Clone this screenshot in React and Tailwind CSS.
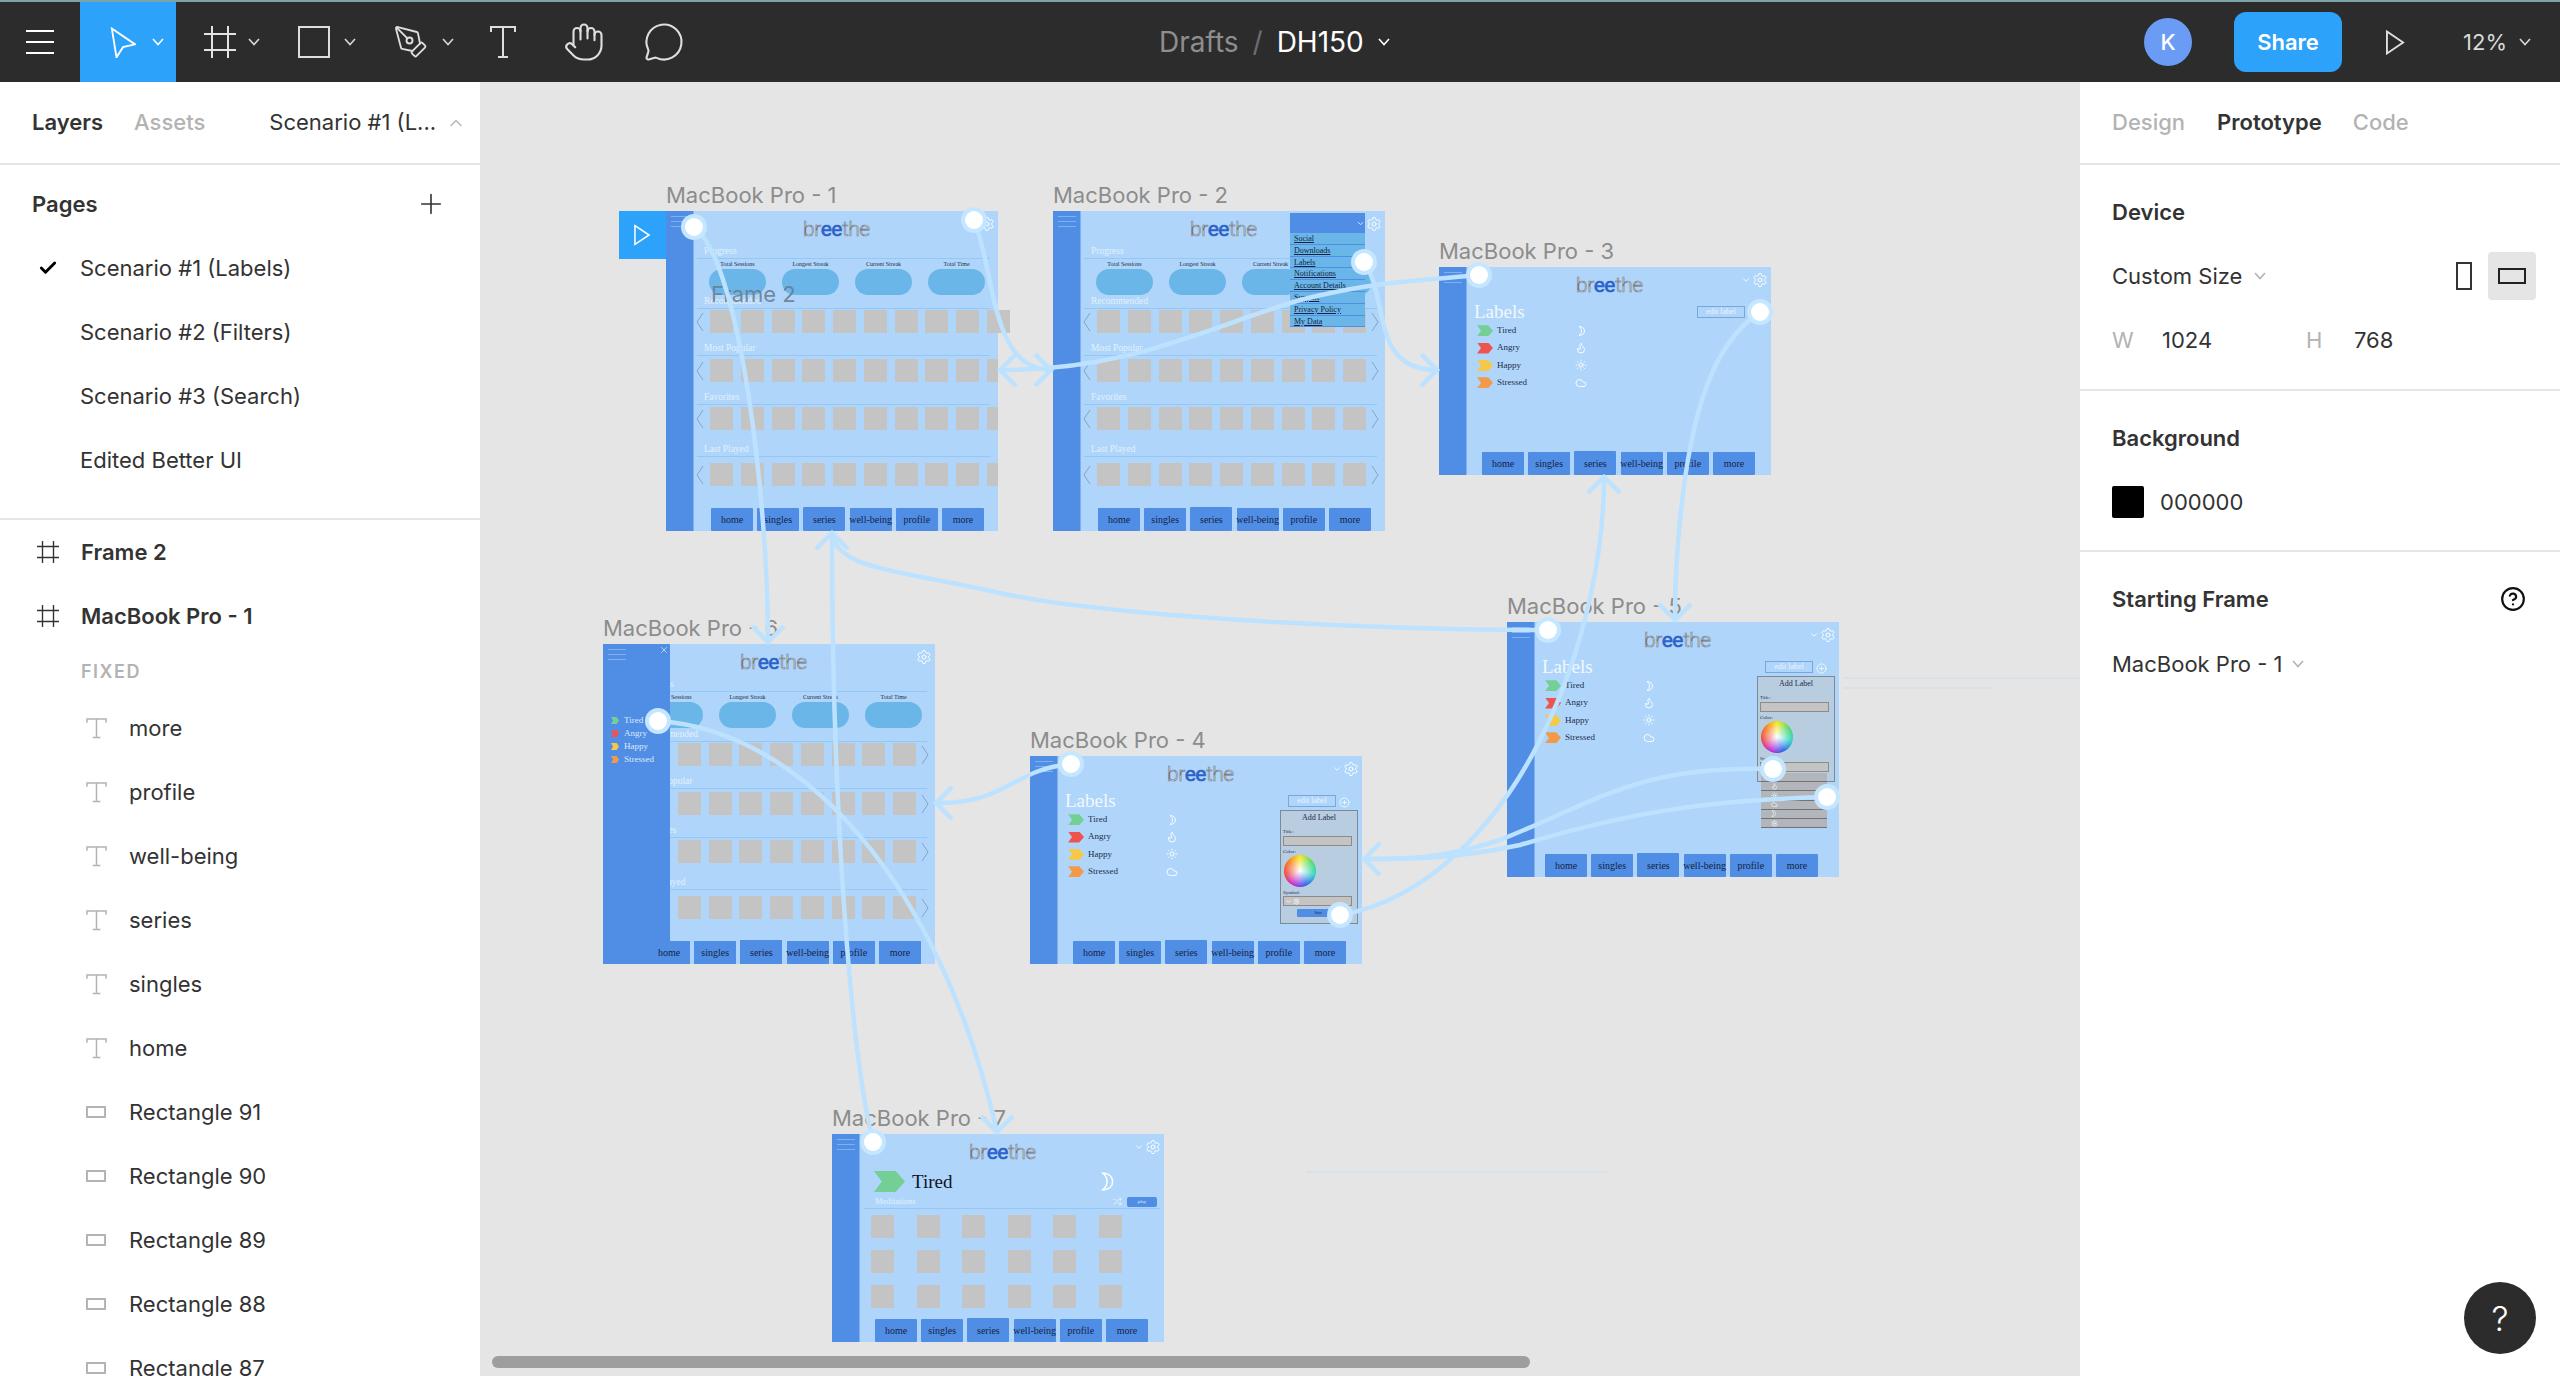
import React from "react";
import { Settings, Flame, Sun, Cloud, X, Shuffle, PlusCircle, ChevronDown, ChevronUp, Hand, MessageCircle, PenTool, Plus, Check, CircleHelp } from "lucide-react";

const serif = "font-['Liberation_Serif',serif]";

function Chev({ className = "text-white" }) {
  return (
    <svg viewBox="0 0 12 8" className={`w-[12px] h-[8px] shrink-0 ${className}`} fill="none" stroke="currentColor" strokeWidth="1.6">
      <path d="M1 1l5 5.5L11 1" />
    </svg>
  );
}

function Crescent({ className, strokeWidth = 1.6 }) {
  return (
    <svg viewBox="0 0 14 20" className={className} fill="none" stroke="currentColor" strokeWidth={strokeWidth} strokeLinejoin="round">
      <path d="M2 1c7 0 11 4 11 9s-4 9-11 9c3-2 5-5 5-9s-2-7-5-9z" />
    </svg>
  );
}

function FrameGlyph({ className }) {
  return (
    <svg viewBox="0 0 32 32" className={className} fill="none" stroke="currentColor" strokeWidth="2">
      <path d="M8 0v32M24 0v32M0 8h32M0 24h32" />
    </svg>
  );
}

function TGlyph() {
  return (
    <svg viewBox="0 0 22 22" className="w-[21px] h-[21px] text-[#b3b3b3]" fill="none" stroke="currentColor" strokeWidth="1.6">
      <path d="M1 5V1h20v4M1 1h20M11 1v20M7 20.5h8" />
    </svg>
  );
}

function RectGlyph() {
  return <div className="w-[20px] h-[12px] border-2 border-[#b3b3b3]" />;
}

function TopBar() {
  return (
    <div className="h-[80px] bg-[#2c2c2c] flex items-center shrink-0">
      <div className="w-[80px] h-full flex flex-col items-center justify-center gap-[9px]">
        <div className="w-[28px] h-[2px] bg-white" />
        <div className="w-[28px] h-[2px] bg-white" />
        <div className="w-[28px] h-[2px] bg-white" />
      </div>
      <div className="w-[96px] h-full bg-[#2ca2fb] flex items-center pl-[30px] gap-[16px]">
        <svg viewBox="0 0 28 32" className="w-[26px] h-[31px]" fill="none" stroke="white" strokeWidth="2">
          <path d="M2 1l25 17-13 3-7 11z" />
        </svg>
        <Chev />
      </div>
      <div className="w-[96px] h-full flex items-center pl-[28px] gap-[12px] text-[#e3e3e3]">
        <FrameGlyph className="w-[32px] h-[32px]" />
        <Chev className="text-[#d8d8d8]" />
      </div>
      <div className="w-[96px] h-full flex items-center pl-[26px] gap-[14px]">
        <div className="w-[32px] h-[32px] border-2 border-[#dedede]" />
        <Chev className="text-[#d8d8d8]" />
      </div>
      <div className="w-[96px] h-full flex items-center pl-[25px] gap-[13px] text-[#dedede]">
        <PenTool size={36} strokeWidth={1.25} />
        <Chev className="text-[#d8d8d8]" />
      </div>
      <div className="w-[80px] h-full flex items-center pl-[26px] text-[#dedede]">
        <svg viewBox="0 0 26 32" className="w-[26px] h-[32px]" fill="none" stroke="currentColor" strokeWidth="2">
          <path d="M1 6V1h24v5M1 1h24M13 1v30M8 31h10" />
        </svg>
      </div>
      <div className="w-[80px] h-full flex items-center justify-center text-[#dedede]">
        <Hand size={42} strokeWidth={1.2} />
      </div>
      <div className="w-[80px] h-full flex items-center justify-center text-[#dedede]">
        <MessageCircle size={42} strokeWidth={1.2} />
      </div>
      <div className="ml-[455px] flex items-center text-[28px] leading-none">
        <span className="text-[#8e8e8e]">Drafts</span>
        <span className="text-[#6e6e6e] ml-[14px] mr-[14px]">/</span>
        <span className="text-white">DH150</span>
        <Chev className="text-white ml-[14px]" />
      </div>
      <div className="ml-auto flex items-center pr-[29px]">
        <div className="w-[48px] h-[48px] rounded-full bg-[#6b9cf5] flex items-center justify-center text-white text-[22px] font-medium">K</div>
        <div className="ml-[42px] w-[108px] h-[60px] rounded-[12px] bg-[#2ca2fb] flex items-center justify-center text-white text-[22px] font-semibold">Share</div>
        <svg viewBox="0 0 20 26" className="ml-[44px] w-[19px] h-[25px]" fill="none" stroke="#dedede" strokeWidth="2">
          <path d="M1 1.5l17 11.5-17 11.5z" />
        </svg>
        <span className="ml-[58px] text-[22px] text-[#d9d9d9]">12%</span>
        <Chev className="text-[#d8d8d8] ml-[12px]" />
      </div>
    </div>
  );
}

function Row({ children, className = "" }) {
  return <div className={`h-[64px] flex items-center shrink-0 text-[22px] text-[#333] ${className}`}>{children}</div>;
}

function LeftPanel() {
  const texts = ["more", "profile", "well-being", "series", "singles", "home"];
  const rects = ["Rectangle 91", "Rectangle 90", "Rectangle 89", "Rectangle 88", "Rectangle 87"];
  const pages = ["Scenario #2 (Filters)", "Scenario #3 (Search)", "Edited Better UI"];
  return (
    <aside className="w-[480px] shrink-0 bg-white flex flex-col overflow-hidden">
      <div className="h-[83px] shrink-0 border-b-2 border-[#e5e5e5] flex items-center text-[22px] pl-[32px]">
        <span className="font-semibold text-[#333]">Layers</span>
        <span className="font-medium text-[#b3b3b3] ml-[31px]">Assets</span>
        <span className="text-[#333] ml-[64px]">Scenario #1 (L...</span>
        <ChevronUp size={20} className="ml-[10px] text-[#b3b3b3]" strokeWidth={1.6} />
      </div>
      <div className="h-[71px] pt-[7px] shrink-0 flex items-center justify-between pl-[32px] pr-[33px]">
        <span className="text-[22px] font-semibold text-[#333]">Pages</span>
        <Plus size={32} strokeWidth={1.2} className="text-[#333]" />
      </div>
      <Row className="pl-[38px]">
        <Check size={20} strokeWidth={3.5} className="text-black" />
        <span className="ml-[22px]">Scenario #1 (Labels)</span>
      </Row>
      {pages.map((p) => (
        <Row key={p} className="pl-[80px]">{p}</Row>
      ))}
      <div className="h-[26px] shrink-0 border-b-2 border-[#e5e5e5] box-content" />
      {["Frame 2", "MacBook Pro - 1"].map((f) => (
        <Row key={f} className="pl-[37px] font-semibold">
          <FrameGlyph className="w-[22px] h-[22px] text-[#333]" />
          <span className="ml-[22px]">{f}</span>
        </Row>
      ))}
      <div className="h-[48px] pb-[2px] shrink-0 flex items-center pl-[81px] text-[18px] font-semibold tracking-[1.5px] text-[#b3b3b3]">FIXED</div>
      {texts.map((t) => (
        <Row key={t} className="pl-[86px]">
          <TGlyph />
          <span className="ml-[22px]">{t}</span>
        </Row>
      ))}
      {rects.map((t) => (
        <Row key={t} className="pl-[86px] items-start pt-[19px]">
          <div className="mt-[7px]"><RectGlyph /></div>
          <span className="ml-[23px] leading-[26px]">{t}</span>
        </Row>
      ))}
    </aside>
  );
}

function RightPanel() {
  return (
    <aside className="w-[480px] shrink-0 bg-white flex flex-col text-[22px] text-[#333]">
      <div className="h-[83px] shrink-0 border-b-2 border-[#e5e5e5] flex items-center pl-[32px]">
        <span className="font-medium text-[#b3b3b3]">Design</span>
        <span className="font-semibold ml-[32px]">Prototype</span>
        <span className="font-medium text-[#b3b3b3] ml-[31px]">Code</span>
      </div>
      <div className="h-[87px] pt-[7px] flex items-center pl-[32px] font-semibold shrink-0">Device</div>
      <div className="h-[48px] flex items-center pl-[32px] shrink-0">
        <span>Custom Size</span>
        <Chev className="text-[#b3b3b3] ml-[12px]" />
        <div className="ml-auto w-[16px] h-[28px] border-2 border-[#333]" />
        <div className="ml-[16px] mr-[24px] w-[48px] h-[48px] rounded-[4px] bg-[#e5e5e5] flex items-center justify-center">
          <div className="w-[28px] h-[16px] border-2 border-[#222]" />
        </div>
      </div>
      <div className="h-[80px] flex items-center pl-[32px] shrink-0">
        <span className="text-[#b3b3b3] w-[50px]">W</span>
        <span className="w-[144px]">1024</span>
        <span className="text-[#b3b3b3] w-[48px]">H</span>
        <span>768</span>
      </div>
      <div className="h-[11px] shrink-0 border-b-2 border-[#e5e5e5]" />
      <div className="h-[94px] flex items-center pl-[32px] font-semibold shrink-0">Background</div>
      <div className="h-[33px] flex items-center pl-[32px] pt-[1px] shrink-0">
        <div className="w-[32px] h-[32px] bg-black rounded-[2px]" />
        <span className="ml-[16px]">000000</span>
      </div>
      <div className="h-[34px] shrink-0 border-b-2 border-[#e5e5e5]" />
      <div className="h-[94px] flex items-center justify-between pl-[32px] pr-[34px] font-semibold shrink-0">
        <span>Starting Frame</span>
        <CircleHelp size={26} strokeWidth={2} className="text-[#111]" />
      </div>
      <div className="h-[36px] flex items-center pl-[32px] shrink-0">
        <span>MacBook Pro - 1</span>
        <Chev className="text-[#b3b3b3] ml-[10px]" />
      </div>
    </aside>
  );
}

function Hamburger() {
  return (
    <div className="flex flex-col gap-[4px] pt-[5px] pl-[5px]">
      <div className="w-[18px] h-[1px] bg-[#7fb0f0]" />
      <div className="w-[18px] h-[1px] bg-[#7fb0f0]" />
      <div className="w-[18px] h-[1px] bg-[#7fb0f0]" />
    </div>
  );
}

function Logo() {
  return (
    <div className="font-['Roboto',sans-serif] font-light text-[21px] leading-[22px] tracking-[-0.5px] text-[#e3ebf3] [-webkit-text-stroke:0.6px_#70747c]">
      br<span className="text-[#2d62c9] font-normal [-webkit-text-stroke:0.6px_#2d62c9]">ee</span>the
    </div>
  );
}

function FrameHeader({ chevron = true }) {
  return (
    <div className="h-[34px] shrink-0 flex items-start pt-[4px] pr-[3px]">
      <div className="ml-[109px] mt-[3px]"><Logo /></div>
      <div className="ml-auto flex items-center gap-[1px] text-white mt-[1px]">
        {chevron && <ChevronDown size={10} strokeWidth={2} />}
        <Settings size={16} strokeWidth={1.4} />
      </div>
    </div>
  );
}

function SectionTitle({ children, className = "" }) {
  return (
    <div className={`h-[14px] shrink-0 ml-[3px] mr-[8px] border-b border-[#93c8f6] flex items-center pl-[7px] text-[9.5px] text-[#e3f0fc] ${serif} ${className}`}>
      {children}
    </div>
  );
}

function Caret({ dir }) {
  return (
    <svg viewBox="0 0 8 20" className="w-[8px] h-[20px] shrink-0" fill="none" stroke="#7f9cc0" strokeWidth="0.9">
      <path d={dir === "left" ? "M7 1L1 10l6 9" : "M1 1l6 9-6 9"} />
    </svg>
  );
}

function Squares({ extra = 0, className = "" }) {
  return (
    <div className={`h-[23px] shrink-0 flex items-center ${className}`}>
      <div className="ml-[2px] mr-[6px]"><Caret dir="left" /></div>
      <div className="flex gap-[7.75px] shrink-0">
        {Array.from({ length: 9 }).map((_, i) => (
          <div key={i} className="w-[23px] h-[23px] bg-[#c4c4c4]" />
        ))}
        {extra === 23 && <div className="w-[23px] h-[23px] bg-[#c4c4c4]" />}
        {extra === 11 && <div className="w-[11px] h-[23px] bg-[#c4c4c4]" />}
      </div>
      {extra === 0 && <div className="ml-[5px]"><Caret dir="right" /></div>}
    </div>
  );
}

function NavButtons({ className = "pl-[17px]" }) {
  const items = ["home", "singles", "series", "well-being", "profile", "more"];
  return (
    <div className={`mt-auto flex items-end gap-[4.2px] relative ${className}`}>
      {items.map((n) => (
        <div
          key={n}
          className={`w-[42px] ${n === "series" ? "h-[24px]" : "h-[23px]"} rounded-[1px] bg-[#508de5] flex items-center justify-center whitespace-nowrap text-[10px] text-[#15233f] ${serif}`}
        >
          {n}
        </div>
      ))}
    </div>
  );
}

function FrameShell({ className, label, children }) {
  return (
    <div className={`absolute ${className} w-[332px] bg-[#afd6fa] flex`}>
      <div className="absolute left-0 -top-[29px] h-[26px] text-[22px] leading-[26px] whitespace-nowrap text-[#8c8c8c]">{label}</div>
      <div className="w-[28px] shrink-0 bg-[#508de5] border-r border-[#7fb0f0]"><Hamburger /></div>
      <div className="flex-1 min-w-0 flex flex-col relative">{children}</div>
    </div>
  );
}

function Stats() {
  const labels = ["Total Sessions", "Longest Streak", "Current Streak", "Total Time"];
  return (
    <div className="shrink-0 pl-[15px]">
      <div className={`h-[10px] flex gap-[16px] ${serif} text-[6px] text-[#1d2c4a] text-center`}>
        {labels.map((l) => (
          <div key={l} className="w-[57px] leading-[10px] whitespace-nowrap">{l}</div>
        ))}
      </div>
      <div className="h-[26px] flex gap-[16px]">
        {labels.map((l) => (
          <div key={l} className="w-[57px] h-[26px] rounded-full bg-[#6ab6e8]" />
        ))}
      </div>
    </div>
  );
}

function Dashboard({ first }) {
  return (
    <>
      <FrameHeader chevron={false} />
      <SectionTitle>Progress</SectionTitle>
      <Stats />
      <SectionTitle>Recommended</SectionTitle>
      <Squares extra={first ? 23 : 0} className="mt-[1px]" />
      <SectionTitle className="mt-[9px]">Most Popular</SectionTitle>
      <Squares extra={first ? 11 : 0} className="mt-[3px]" />
      <SectionTitle className="mt-[9px]">Favorites</SectionTitle>
      <Squares extra={first ? 11 : 0} className="mt-[2px]" />
      <SectionTitle className="mt-[13px]">Last Played</SectionTitle>
      <Squares extra={first ? 11 : 0} className="mt-[6px]" />
      <NavButtons />
    </>
  );
}

function Flag({ color, className = "w-[16px] h-[11px]" }) {
  return <div className={`${className} ${color} shrink-0 [clip-path:polygon(0_0,70%_0,100%_50%,70%_100%,0_100%,25%_50%)]`} />;
}

const LABELS = [
  { name: "Tired", color: "bg-[#74cf96]", Icon: Crescent },
  { name: "Angry", color: "bg-[#ef5350]", Icon: Flame },
  { name: "Happy", color: "bg-[#f5c84c]", Icon: Sun },
  { name: "Stressed", color: "bg-[#f29a4a]", Icon: Cloud },
];

function LabelsBody({ plus }) {
  return (
    <div className="shrink-0 pl-[7px]">
      <div className="h-[21px] flex items-center">
        <span className={`${serif} text-[19px] leading-none text-[#f2f8fe]`}>Labels</span>
        <div className={`ml-auto mr-[26px] w-[48px] h-[12px] border border-[#7aa6dc] flex items-center justify-center text-[8px] leading-none text-[#e8f3fd] ${serif}`}>edit label</div>
        {plus && (
          <div className="absolute right-[12px] top-[41px] text-white">
            <PlusCircle size={11} strokeWidth={1.6} />
          </div>
        )}
      </div>
      {LABELS.map(({ name, color, Icon }) => (
        <div key={name} className="h-[17.4px] flex items-center">
          <div className="ml-[3px]"><Flag color={color} /></div>
          <span className={`ml-[4px] w-[78px] text-[9px] text-[#1d2c4a] ${serif}`}>{name}</span>
          {Icon === Crescent ? (
            <Crescent className="w-[7px] h-[10px] ml-[3px] text-white" strokeWidth={1.8} />
          ) : (
            <Icon size={12} strokeWidth={1.8} className="text-white" />
          )}
        </div>
      ))}
    </div>
  );
}

function AddLabel({ withSave = true }) {
  return (
    <div className={`absolute left-[222px] top-[54px] w-[78px] ${withSave ? "h-[114px]" : "h-[106px]"} bg-[#b9cde0] border border-[#7b8a99] flex flex-col pl-[2px] pr-[5px] ${serif} text-[#1d2c4a]`}>
      <div className="h-[13px] flex items-center justify-center text-[8px] pl-[3px]">Add Label</div>
      <div className="text-[5px] leading-[6px] mt-[5px]">Title:</div>
      <div className="h-[10px] mt-[1px] bg-[#c4c4c4] border border-[#8b8b8b]" />
      <div className="text-[5px] leading-[6px] mt-[3px]">Color:</div>
      <div className="w-[32px] h-[32px] ml-[1px] rounded-full bg-[radial-gradient(circle,white_0%,transparent_70%),conic-gradient(#f5e614,#4cd964,#2dd4bf,#2563eb,#c026d3,#ef4444,#f97316,#f5e614)]" />
      <div className="text-[5px] leading-[6px] mt-[3px]">Symbol:</div>
      <div className="h-[10px] bg-[#c4c4c4] border border-[#8b8b8b] flex items-center gap-[1px] pl-[1px] text-white">
        <ChevronDown size={7} strokeWidth={2.5} />
        <Settings size={7} strokeWidth={2} />
      </div>
      {withSave && (
        <div className="mt-[3px] ml-[14px] w-[43px] h-[8px] rounded-[1px] bg-[#508de5] flex items-center justify-center text-[4px] leading-none text-[#10203c]">Save</div>
      )}
    </div>
  );
}

function Frame3() {
  return (
    <FrameShell className="left-[959px] top-[185px] h-[208px]" label="MacBook Pro - 3">
      <FrameHeader />
      <LabelsBody />
      <NavButtons className="pl-[15px]" />
    </FrameShell>
  );
}

function Frame4() {
  return (
    <FrameShell className="left-[550px] top-[674px] h-[208px]" label="MacBook Pro - 4">
      <FrameHeader />
      <LabelsBody plus />
      <AddLabel />
      <NavButtons className="pl-[15px]" />
    </FrameShell>
  );
}

function Frame5() {
  return (
    <FrameShell className="left-[1027px] top-[540px] h-[255px]" label="MacBook Pro - 5">
      <FrameHeader />
      <LabelsBody plus />
      <AddLabel withSave={false} />
      <div className="absolute left-[226px] top-[151px] w-[66px] flex flex-col text-white">
        {[Settings, Flame, Sun, Cloud, Crescent, Settings].map((Icon, i) => (
          <div key={i} className="h-[9.2px] bg-[#b2b6ba] border-b border-[#6f7377] flex items-center pl-[10px]">
            {Icon === Crescent ? <Crescent className="w-[5px] h-[7px]" /> : <Icon size={7} strokeWidth={2} />}
          </div>
        ))}
      </div>
      <NavButtons className="pl-[10px]" />
    </FrameShell>
  );
}

function Frame7() {
  const rows = [0, 1, 2];
  const cols = [0, 1, 2, 3, 4, 5];
  return (
    <FrameShell className="left-[352px] top-[1052px] h-[208px]" label="MacBook Pro - 7">
      <FrameHeader />
      <div className="h-[27px] shrink-0 flex items-center pl-[14px] pr-[50px]">
        <Flag color="bg-[#74cf96]" className="w-[31px] h-[21px]" />
        <span className={`ml-[7px] ${serif} text-[19px] leading-none text-[#0c1526]`}>Tired</span>
        <Crescent className="ml-auto w-[14px] h-[19px] text-white" strokeWidth={1.5} />
      </div>
      <div className="h-[14px] shrink-0 ml-[4px] mr-[4px] border-b border-[#93c8f6] flex items-center pl-[11px] pr-[3px]">
        <span className={`${serif} text-[8.5px] text-[#e3f0fc]`}>Meditations</span>
        <Shuffle size={9} strokeWidth={1.5} className="ml-auto text-white" />
        <div className={`ml-[5px] w-[30px] h-[10px] rounded-[2px] bg-[#508de5] flex items-center justify-center text-[5px] text-[#dbe9fb] ${serif}`}>play</div>
      </div>
      <div className="mt-[6px] pl-[11px] flex flex-col gap-[12px]">
        {rows.map((r) => (
          <div key={r} className="flex gap-[22.6px]">
            {cols.map((c) => (
              <div key={c} className="w-[23px] h-[23px] bg-[#c4c4c4]" />
            ))}
          </div>
        ))}
      </div>
      <NavButtons className="pl-[15px]" />
    </FrameShell>
  );
}

function Frame1() {
  return (
    <FrameShell className="left-[186px] top-[129px] h-[320px]" label="MacBook Pro - 1">
      <Dashboard first />
      <div className="absolute -left-[75px] top-0 w-[47px] h-[48px] bg-[#2ca2fb] flex items-center justify-center">
        <svg viewBox="0 0 18 22" className="w-[17px] h-[22px]" fill="none" stroke="white" strokeWidth="1.6">
          <path d="M1 1l15 10-15 10z" />
        </svg>
      </div>
      <div className="absolute left-[17px] top-[70px] text-[22px] leading-[26px] text-[#6b7c90]/90">Frame 2</div>
    </FrameShell>
  );
}

function Frame2() {
  const items = ["Social", "Downloads", "Labels", "Notifications", "Account Details", "Support", "Privacy Policy", "My Data"];
  return (
    <FrameShell className="left-[573px] top-[129px] h-[320px]" label="MacBook Pro - 2">
      <Dashboard />
      <div className="absolute left-[209px] top-[2px] w-[75px] flex flex-col">
        <div className="h-[20px] bg-[#508de5] flex items-center justify-end text-white">
          <ChevronDown size={9} strokeWidth={2} />
        </div>
        {items.map((m) => (
          <div key={m} className={`h-[11.8px] bg-[#6ab6e8] border-b border-[#508de5] pl-[4px] text-[8px] leading-[11px] underline whitespace-nowrap overflow-hidden text-[#14233f] ${serif}`}>{m}</div>
        ))}
      </div>
    </FrameShell>
  );
}

function Frame6() {
  return (
    <FrameShell className="left-[123px] top-[562px] h-[320px]" label="MacBook Pro - 6">
      <Dashboard />
      <div className="absolute -left-[28px] top-0 w-[67px] h-[320px] bg-[#508de5] flex flex-col">
        <Hamburger />
        <X size={10} strokeWidth={1.4} className="absolute left-[56px] top-[1px] text-white" />
        <div className="absolute left-[8px] top-[70px] flex flex-col">
          {LABELS.map(({ name, color }) => (
            <div key={name} className="h-[13px] flex items-center">
              <Flag color={color} className="w-[8px] h-[7px]" />
              <span className={`ml-[5px] text-[9px] text-[#dce9fb] ${serif}`}>{name}</span>
            </div>
          ))}
        </div>
      </div>
      <div className="absolute left-0 right-0 bottom-0 flex flex-col">
        <NavButtons />
      </div>
    </FrameShell>
  );
}

function Dot({ x, y }) {
  return (
    <g>
      <circle cx={x} cy={y} r="13" fill="#c5e6ff" />
      <circle cx={x} cy={y} r="9" fill="#ffffff" />
    </g>
  );
}

function Head({ x, y, dir }) {
  const s = 16;
  const d = {
    down: `M${x - s} ${y - s} L${x} ${y} L${x + s} ${y - s}`,
    up: `M${x - s} ${y + s} L${x} ${y} L${x + s} ${y + s}`,
    right: `M${x - s} ${y - s} L${x} ${y} L${x - s} ${y + s}`,
    left: `M${x + s} ${y - s} L${x} ${y} L${x + s} ${y + s}`,
  }[dir];
  return <path d={d} />;
}

function Connections() {
  const paths = [
    "M694 227 C740 260 768 500 768 642",
    "M974 220 C995 270 990 370 1051 370",
    "M1479 275 C1430 280 1380 280 1300 300 C1200 330 1130 370 1000 370",
    "M1364 262 C1390 300 1370 370 1437 370",
    "M1760 312 C1710 345 1690 420 1680 520 C1676 560 1675 590 1675 620",
    "M1548 630 C1350 630 1100 615 1000 593 C900 570 840 570 832 535",
    "M873 1142 C850 1050 832 800 832 535",
    "M658 721 C800 730 940 880 997 1132",
    "M1071 764 C1010 770 1010 803 936 803",
    "M1340 915 C1430 900 1500 820 1540 740 C1590 640 1604 540 1604 478",
    "M1773 769 C1640 765 1600 800 1500 840 C1440 860 1400 859 1364 859",
    "M1827 797 C1700 800 1620 815 1520 845 C1450 860 1400 859 1364 859",
  ];
  return (
    <svg viewBox="480 82 1600 1294" className="absolute left-0 top-0 w-[1600px] h-[1294px] pointer-events-none">
      <g fill="none" stroke="#bde2ff" strokeWidth="4.5">
        {paths.map((d) => (
          <path key={d} d={d} />
        ))}
        <Head x={768} y={642} dir="down" />
        <Head x={1051} y={370} dir="right" />
        <Head x={1000} y={370} dir="left" />
        <Head x={1437} y={370} dir="right" />
        <Head x={1675} y={620} dir="down" />
        <Head x={832} y={533} dir="up" />
        <Head x={997} y={1132} dir="down" />
        <Head x={936} y={803} dir="left" />
        <Head x={1604} y={477} dir="up" />
        <Head x={1364} y={859} dir="left" />
      </g>
      <g stroke="#d3dfe9" strokeWidth="1.5">
        <path d="M1844 678H2080M1844 688H1990M1306 1172H1608" />
      </g>
      {[
        [694, 227], [974, 220], [1364, 262], [1479, 275], [1760, 312], [658, 721],
        [1071, 764], [1340, 915], [1548, 630], [1773, 769], [1827, 797], [873, 1142],
      ].map(([x, y]) => (
        <Dot key={`${x}-${y}`} x={x} y={y} />
      ))}
    </svg>
  );
}

export default function App() {
  return (
    <div className="relative w-[2560px] h-[1376px] overflow-hidden flex flex-col bg-[#e5e5e5] font-['Inter',sans-serif]">
      <div className="h-[2px] shrink-0 bg-[#7ba3a8]" />
      <TopBar />
      <div className="flex-1 min-h-0 flex">
        <LeftPanel />
        <main className="flex-1 relative overflow-hidden bg-[#e5e5e5]">
          <Frame1 />
          <Frame2 />
          <Frame3 />
          <Frame6 />
          <Frame4 />
          <Frame5 />
          <Frame7 />
          <Connections />
          <div className="absolute left-[12px] top-[1274px] w-[1038px] h-[12px] rounded-full bg-[#9e9e9e]" />
        </main>
        <RightPanel />
      </div>
      <div className="absolute right-[24px] bottom-[22px] w-[72px] h-[72px] rounded-full bg-[#2c2c2c] flex items-center justify-center text-white text-[34px] font-light">?</div>
    </div>
  );
}
